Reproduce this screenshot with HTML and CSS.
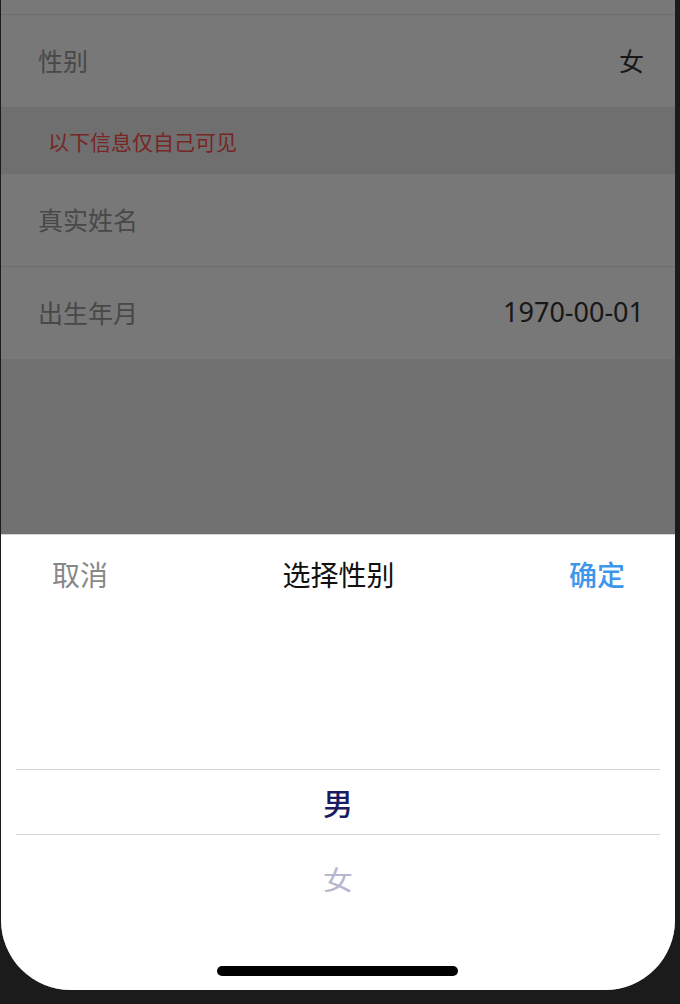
FILE: index.html
```html
<!DOCTYPE html>
<html lang="zh-CN">
<head>
  <meta charset="UTF-8" />
  <title>选择性别</title>
  <link rel="stylesheet" href="styles.css">
</head>
<body>
  <div class="screen">
    <div class="list">
      <div class="row cut"></div>
      <div class="row">
        <span class="label">性别</span>
        <span class="value">女</span>
      </div>
      <div class="tip">以下信息仅自己可见</div>
      <div class="row line">
        <span class="label">真实姓名</span>
      </div>
      <div class="row">
        <span class="label">出生年月</span>
        <span class="value num">1970-00-01</span>
      </div>
    </div>

    <div class="mask"></div>

    <div class="sheet">
      <div class="sheet-head">
        <span class="btn cancel">取消</span>
        <span class="title">选择性别</span>
        <span class="btn ok">确定</span>
      </div>
      <div class="wheel">
        <div class="item active">男</div>
        <div class="item far">女</div>
      </div>
      <div class="home-bar"></div>
    </div>
  </div>
</body>
</html>
```

FILE: styles.css
```css
body { margin: 0; background: #1b1b1b; font-family: "Noto Sans CJK SC", "Noto Sans", sans-serif; }
.screen { position: relative; width: 674px; height: 990px; margin-left: 1px; background: #f0f0f0; border-radius: 0 0 70px 70px; overflow: hidden; }

.list { display: flex; flex-direction: column; }
.row { height: 92px; padding: 0 31px 0 37px; background: #fff; display: flex; align-items: center; justify-content: space-between; }
.row.cut { height: 14px; border-bottom: 1px solid #e8e8e8; }
.row.line { border-bottom: 1px solid #e8e8e8; }
.label { font-size: 25px; color: #9a9a9a; margin-top: -3px; }
.value { font-size: 25px; color: #333; margin-top: -3px; }
.value.num { font-family: "Noto Sans", sans-serif; font-size: 27px; }
.tip { height: 67px; padding-left: 47px; display: flex; align-items: center; font-size: 21px; color: #ff5050; background: #ececec; }

.mask { position: absolute; inset: 0; background: rgba(0, 0, 0, 0.53); }

.sheet { position: absolute; left: 0; right: 0; top: 534px; bottom: 0; background: #fff; border-top: 1px solid #d4d4d4; }
.sheet-head { height: 78px; padding: 0 50px 0 51px; display: flex; align-items: center; justify-content: space-between; font-size: 28px; }
.cancel { color: #888; }
.title { color: #111; }
.ok { color: #3d95ec; font-weight: 500; }

.wheel { margin: 0 15px; padding-top: 156px; display: flex; flex-direction: column; }
.item { height: 64px; display: flex; align-items: center; justify-content: center; font-size: 30px; }
.item.active { color: #1b1b5e; font-weight: 500; border-top: 1px solid #d6d6d6; border-bottom: 1px solid #d6d6d6; }
.item.far { color: #b6b6d0; transform: translateY(12px) scaleY(0.86); }

.home-bar { position: absolute; left: 50%; bottom: 14px; width: 241px; height: 10px; margin-left: -121px; background: #000; border-radius: 5px; }
```
